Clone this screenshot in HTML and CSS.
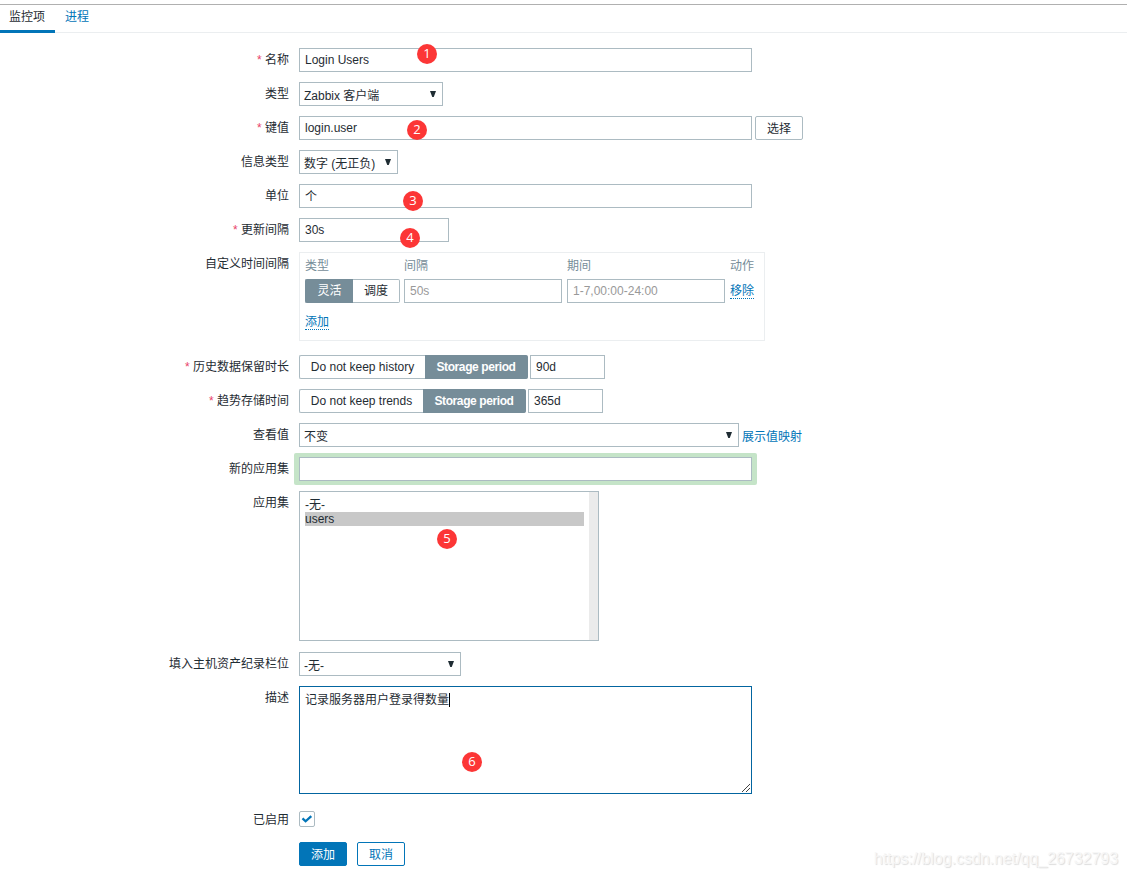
FILE: index.html
```html
<!DOCTYPE html>
<html lang="zh-CN">
<head>
<meta charset="utf-8">
<title>监控项</title>
<link rel="stylesheet" href="styles.css">
</head>
<body>
<nav class="tabs">
  <a class="tab tab-active">监控项</a>
  <a class="tab">进程</a>
</nav>
<main class="form">
  <div class="row"><label class="label required">名称</label><div class="field"><input class="input wide" value="Login Users"></div></div>
  <div class="row"><label class="label">类型</label><div class="field"><div class="select select-type"><span>Zabbix 客户端</span><i class="arrow"></i></div></div></div>
  <div class="row"><label class="label required">键值</label><div class="field"><input class="input wide" value="login.user"><button class="btn btn-grey">选择</button></div></div>
  <div class="row"><label class="label">信息类型</label><div class="field"><div class="select select-info"><span>数字 (无正负)</span><i class="arrow"></i></div></div></div>
  <div class="row"><label class="label">单位</label><div class="field"><input class="input wide input-cjk" value="个"></div></div>
  <div class="row"><label class="label required">更新间隔</label><div class="field"><input class="input medium" value="30s"></div></div>
  <div class="row row-intervals"><label class="label">自定义时间间隔</label>
    <div class="intervals">
      <span class="head">类型</span><span class="head">间隔</span><span class="head">期间</span><span class="head">动作</span>
      <div class="segmented"><span class="seg seg-on seg-flex">灵活</span><span class="seg seg-sched">调度</span></div>
      <input class="input cell" placeholder="50s">
      <input class="input cell" placeholder="1-7,00:00-24:00">
      <div class="link-cell"><a class="link-dotted">移除</a></div>
      <div class="link-cell add"><a class="link-dotted">添加</a></div>
    </div>
  </div>
  <div class="row"><label class="label required">历史数据保留时长</label><div class="field"><div class="segmented"><span class="seg seg-history">Do not keep history</span><span class="seg seg-on seg-period">Storage period</span></div><input class="input small" value="90d"></div></div>
  <div class="row"><label class="label required">趋势存储时间</label><div class="field"><div class="segmented"><span class="seg seg-trends">Do not keep trends</span><span class="seg seg-on seg-period">Storage period</span></div><input class="input small" value="365d"></div></div>
  <div class="row"><label class="label">查看值</label><div class="field"><div class="select select-value"><span>不变</span><i class="arrow"></i></div><a class="link">展示值映射</a></div></div>
  <div class="row"><label class="label">新的应用集</label><div class="field"><div class="highlight"><input class="input wide"></div></div></div>
  <div class="row row-apps"><label class="label">应用集</label>
    <div class="listbox"><div class="options"><div class="option">-无-</div><div class="option option-on">users</div></div><div class="scrollbar"></div></div>
  </div>
  <div class="row"><label class="label">填入主机资产纪录栏位</label><div class="field"><div class="select select-inventory"><span>-无-</span><i class="arrow"></i></div></div></div>
  <div class="row"><label class="label">描述</label>
    <div class="textarea"><span class="text">记录服务器用户登录得数量</span><span class="caret"></span>
      <svg class="grip" width="8" height="8" viewBox="0 0 8 8" shape-rendering="crispEdges"><path d="M0 7h1v1h-1zM1 6h1v1h-1zM2 5h1v1h-1zM3 4h1v1h-1zM4 3h1v1h-1zM5 2h1v1h-1zM6 1h1v1h-1zM7 0h1v1h-1zM4 7h1v1h-1zM5 6h1v1h-1zM6 5h1v1h-1zM7 4h1v1h-1z" fill="#444"/></svg>
    </div>
  </div>
  <div class="row row-enabled"><label class="label">已启用</label><div class="field"><span class="checkbox"><svg width="12" height="10" viewBox="0 0 12 10"><path d="M1.5 4.4L4.6 7.3L10.3 2.2" fill="none" stroke="#0275b8" stroke-width="2.3"/></svg></span></div></div>
  <div class="row"><span class="label"></span><div class="field actions"><button class="btn btn-primary">添加</button><button class="btn btn-outline">取消</button></div></div>
</main>
<span class="badge badge-1">1</span>
<span class="badge badge-2">2</span>
<span class="badge badge-3">3</span>
<span class="badge badge-4">4</span>
<span class="badge badge-5">5</span>
<span class="badge badge-6">6</span>
<div class="watermark">https://blog.csdn.net/qq_26732793</div>
</body>
</html>
```
FILE: styles.css
```css
* { box-sizing: border-box; }
body {
  margin: 0;
  padding-top: 4px;
  height: 877px;
  overflow: hidden;
  position: relative;
  background: #fff;
  color: #1f2c33;
  font: 12px/24px "Liberation Sans", "Noto Sans CJK SC", sans-serif;
}
input, button { font: inherit; color: inherit; margin: 0; }

.tabs {
  display: flex;
  height: 29px;
  border-top: 1px solid #b0b0b0;
  border-bottom: 1px solid #ebeef0;
}
.tab { height: 28px; padding: 0 10px; color: #0275b8; }
.tab-active { padding: 0 10px 0 9px; color: #1f2c33; border-bottom: 3px solid #0275b8; }

.form { padding-top: 15px; }
.row { display: flex; gap: 10px; margin-bottom: 10px; }
.label { width: 289px; flex: none; text-align: right; height: 24px; }
.required::before { content: "* "; color: #e8436a; }
.field { display: flex; height: 24px; }
.row-intervals { margin-bottom: 14px; }
.row-apps { margin-bottom: 11px; }
.row-enabled { margin: 14px 0 10px; }

.input {
  height: 24px;
  padding: 0 5px;
  border: 1px solid #acbbc2;
  background: #fff;
  outline: none;
}
.input::placeholder { color: #999; opacity: 1; }
.input-cjk { padding-top: 2px; }
.wide { width: 453px; }
.medium { width: 150px; }
.small { width: 75px; margin-left: 2px; }
.cell { width: 158px; }
.highlight {
  display: flex;
  height: 32px;
  margin: -4px -5px;
  padding: 4px 5px;
  border-radius: 2px;
  background: #c5e4c8;
}

.select {
  display: flex;
  justify-content: space-between;
  height: 24px;
  padding: 1px 6px 0 4px;
  border: 1px solid #acbbc2;
  white-space: nowrap;
}
.arrow {
  width: 6px;
  height: 6px;
  margin-top: 7px;
  background: #1f2c33;
  clip-path: polygon(0 0, 100% 0, 62% 100%, 38% 100%);
}
.select-type { width: 144px; }
.select-info { width: 99px; }
.select-value { width: 440px; }
.select-inventory { width: 162px; }

.btn {
  height: 24px;
  width: 48px;
  padding: 2px 0 0;
  line-height: 20px;
  border: 1px solid #0275b8;
  border-radius: 2px;
  background: #fff;
}
.btn-grey { margin-left: 3px; border-color: #acbbc2; }
.btn-primary { background: #0275b8; color: #fff; }
.btn-outline { color: #0275b8; }
.actions { gap: 10px; }

.intervals {
  display: grid;
  grid-template-columns: 99px 163px 163px 28px;
  grid-template-rows: 24px 24px 24px;
  row-gap: 1px;
  width: 466px;
  height: 89px;
  padding: 1px 5px;
  border: 1px solid #ebeef0;
}
.head { color: #768d99; }
.link-cell { line-height: 14px; padding-top: 5px; }
.add { padding-top: 11px; }
.link { color: #0275b8; margin-left: 3px; padding-top: 2px; }
.link-dotted { display: inline-block; height: 15px; color: #0275b8; border-bottom: 1px dotted #0275b8; }

.segmented { display: flex; height: 24px; }
.seg {
  text-align: center;
  line-height: 22px;
  border: 1px solid #acbbc2;
  white-space: nowrap;
}
.seg:first-child { border-radius: 2px 0 0 2px; border-right: 0; }
.seg:last-child { border-radius: 0 2px 2px 0; border-left: 0; }
.seg-on { background: #768d99; border-color: #768d99; color: #fff; }
.seg-flex { width: 48px; }
.seg-sched { width: 47px; }
.seg-history { width: 126px; }
.seg-trends { width: 124px; }
.seg-period { width: 103px; font-weight: bold; letter-spacing: -0.4px; }

.listbox { display: flex; width: 300px; height: 150px; border: 1px solid #acbbc2; }
.options { flex: 1; padding: 5px; }
.option { height: 15px; line-height: 16px; }
.option-on { height: 14px; line-height: 14px; background: #c8c8c8; }
.scrollbar { width: 9px; background: #ebebeb; }

.textarea {
  display: flex;
  position: relative;
  width: 453px;
  height: 108px;
  padding: 1px 5px;
  border: 1px solid #0365a0;
}
.caret { width: 1px; height: 14px; margin-top: 5px; background: #000; }
.grip { position: absolute; right: 1px; bottom: 1px; }
.checkbox {
  display: grid;
  place-items: center;
  width: 16px;
  height: 16px;
  margin-top: 3px;
  border: 1px solid #acbbc2;
  border-radius: 2px;
}

.badge {
  position: absolute;
  width: 20px;
  height: 20px;
  border-radius: 50%;
  background: #fc3636;
  color: #fff;
  text-align: center;
  font: 13px/19px "Open Sans", sans-serif;
}
.badge-1 { left: 417px; top: 44px; }
.badge-2 { left: 407px; top: 120px; }
.badge-3 { left: 403px; top: 191px; }
.badge-4 { left: 400px; top: 228px; }
.badge-5 { left: 437px; top: 529px; }
.badge-6 { left: 462px; top: 752px; }

.watermark {
  position: absolute;
  right: 9px;
  bottom: 8px;
  font-size: 16px;
  line-height: 20px;
  letter-spacing: -0.04px;
  color: #f7f7f7;
  text-shadow: 1px 1px 1px #dcdcdc;
}
```
